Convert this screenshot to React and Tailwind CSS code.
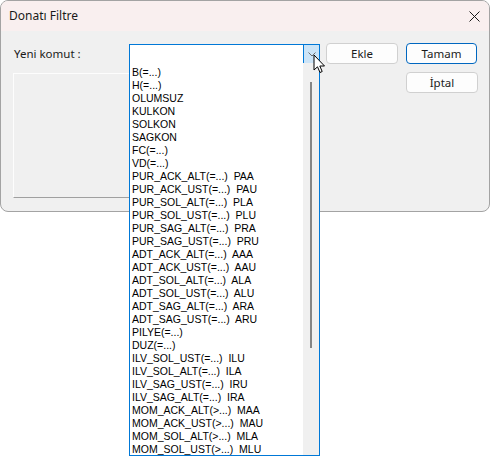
import React from "react";

const items = [
  "B(=...)",
  "H(=...)",
  "OLUMSUZ",
  "KULKON",
  "SOLKON",
  "SAGKON",
  "FC(=...)",
  "VD(=...)",
  "PUR_ACK_ALT(=...)  PAA",
  "PUR_ACK_UST(=...)  PAU",
  "PUR_SOL_ALT(=...)  PLA",
  "PUR_SOL_UST(=...)  PLU",
  "PUR_SAG_ALT(=...)  PRA",
  "PUR_SAG_UST(=...)  PRU",
  "ADT_ACK_ALT(=...)  AAA",
  "ADT_ACK_UST(=...)  AAU",
  "ADT_SOL_ALT(=...)  ALA",
  "ADT_SOL_UST(=...)  ALU",
  "ADT_SAG_ALT(=...)  ARA",
  "ADT_SAG_UST(=...)  ARU",
  "PILYE(=...)",
  "DUZ(=...)",
  "ILV_SOL_UST(=...)  ILU",
  "ILV_SOL_ALT(=...)  ILA",
  "ILV_SAG_UST(=...)  IRU",
  "ILV_SAG_ALT(=...)  IRA",
  "MOM_ACK_ALT(>...)  MAA",
  "MOM_ACK_UST(>...)  MAU",
  "MOM_SOL_ALT(>...)  MLA",
  "MOM_SOL_UST(>...)  MLU",
];

function WinButton({ children, primary }) {
  return (
    <button
      className={
        primary
          ? "block w-[71px] h-[21px] rounded-[4px] border border-[#0067c0] bg-[#fdfdfd] text-[11.5px] leading-none text-[#1b1b1b]"
          : "block w-[72px] h-[21px] rounded-[4px] border border-[#d0d0d0] bg-[#fdfdfd] text-[11.5px] leading-none text-[#1b1b1b]"
      }
    >
      {children}
    </button>
  );
}

export default function App() {
  return (
    <div className="relative w-[491px] h-[457px] bg-white font-['Noto_Sans','Liberation_Sans',sans-serif] overflow-hidden">
      {/* pencere */}
      <div className="w-[490px] h-[212px] rounded-[8px] border border-[#a3a3a3] bg-[#f0f0f0]">
        <div className="h-[30px] rounded-t-[7px] bg-[#f9efef] flex items-center justify-between pl-[8px] pr-[9px]">
          <span className="text-[12px] text-[#1a1a1a]">Donatı Filtre</span>
          <svg width="11" height="11" viewBox="0 0 11 11" className="mt-[1px]">
            <path d="M0.5 0.5 L10.5 10.5 M10.5 0.5 L0.5 10.5" stroke="#1a1a1a" strokeWidth="1" />
          </svg>
        </div>

        <div className="flex items-start pt-[12px] pl-[12px]">
          <div className="w-[307px]">
            <div className="flex items-start h-[21px]">
              <span className="w-[116px] pl-[1px] text-[11.5px] leading-[21px] text-[#1a1a1a]">
                Yeni komut :
              </span>
              <div className="relative mt-[1px] w-[191px] h-[20px] border border-[#0078d7] bg-white flex justify-end">
                <div className="w-[16px] h-full border-l border-[#0078d7] bg-[#cce4f7] flex items-center justify-center">
                  <svg width="8" height="5" viewBox="0 0 8 5">
                    <path d="M0.5 0.5 L4 4 L7.5 0.5" stroke="#6b6b6b" fill="none" strokeWidth="1" />
                  </svg>
                </div>

                {/* açılır liste */}
                <div className="absolute left-[-1px] top-full w-[191px] h-[393px] border-x border-b border-[#0078d7] bg-white flex z-10">
                  <ul className="flex-1 pt-[2.5px] pl-[2px] font-['Liberation_Sans',Arial,sans-serif] text-[10.5px] text-black">
                    {items.map((item) => (
                      <li key={item} className="h-[13px] leading-[13px] whitespace-pre">
                        {item}
                      </li>
                    ))}
                  </ul>
                  <div className="w-[16px] h-full bg-[#f0f0f0] flex flex-col items-center pt-[19px]">
                    <div className="w-[2px] h-[266px] bg-[#858585]" />
                  </div>
                </div>
              </div>
            </div>

            <div className="mt-[9px] w-[292px] h-[125px] border-t border-l border-t-[#fdfdfd] border-l-[#fdfdfd] border-b border-r border-b-[#a0a0a0] border-r-[#a0a0a0]" />
          </div>

          <div className="ml-[6px] flex">
            <WinButton>Ekle</WinButton>
          </div>
          <div className="ml-[8px] flex flex-col gap-[8px]">
            <WinButton primary>Tamam</WinButton>
            <WinButton>İptal</WinButton>
          </div>
        </div>
      </div>

      {/* fare imleci */}
      <svg
        width="13"
        height="20"
        viewBox="0 0 13 20"
        className="absolute left-[313px] top-[54px] z-20"
      >
        <path
          d="M1 1 L1 16 L4.5 12.8 L7 18.5 L9.2 17.5 L6.8 12 L11.5 12 Z"
          fill="white"
          stroke="black"
          strokeWidth="1"
          strokeLinejoin="round"
        />
      </svg>
    </div>
  );
}
